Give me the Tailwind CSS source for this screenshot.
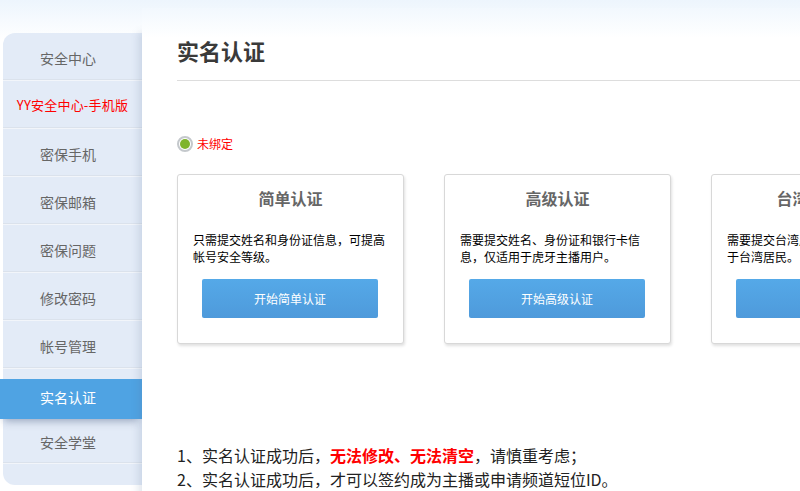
<!DOCTYPE html>
<html lang="zh-CN">
<head>
  <meta charset="UTF-8" />
  <title>实名认证</title>
  <script src="https://cdn.jsdelivr.net/npm/@tailwindcss/browser@4"></script>
</head>
<body class="h-[491px] w-[800px] overflow-hidden bg-white font-['Noto_Sans_CJK_SC','Liberation_Sans',sans-serif]">
  <div class="flex h-[491px] bg-gradient-to-b from-[#edf5fd] to-white to-[40px]">

    <!-- left menu -->
    <aside class="ml-[3px] mt-[33px] h-[452px] w-[139px] shrink-0 rounded-l-[12px] bg-[#e3ebf7] text-center text-sm text-[#666]">
      <a class="block h-[47px] border-b border-[#dbe2ec] pt-[15px] pr-[9px] leading-5 shadow-[0_1px_0_#f2f5fa]">安全中心</a>
      <a class="block h-[48px] border-b border-[#dbe2ec] pt-[15px] leading-5 text-[13px] tracking-[0.2px] text-[#f00] whitespace-nowrap shadow-[0_1px_0_#f2f5fa]">YY安全中心-手机版</a>
      <a class="block h-[48px] border-b border-[#dbe2ec] pt-4 pr-[9px] leading-5 shadow-[0_1px_0_#f2f5fa]">密保手机</a>
      <a class="block h-[48px] border-b border-[#dbe2ec] pt-4 pr-[9px] leading-5 shadow-[0_1px_0_#f2f5fa]">密保邮箱</a>
      <a class="block h-[48px] border-b border-[#dbe2ec] pt-4 pr-[9px] leading-5 shadow-[0_1px_0_#f2f5fa]">密保问题</a>
      <a class="block h-[48px] border-b border-[#dbe2ec] pt-4 pr-[9px] leading-5 shadow-[0_1px_0_#f2f5fa]">修改密码</a>
      <a class="block h-[48px] border-b border-[#dbe2ec] pt-4 pr-[9px] leading-5 shadow-[0_1px_0_#f2f5fa]">帐号管理</a>
      <a class="-ml-[3px] mt-[11px] block h-10 w-[142px] bg-[#4fa3e3] pt-2 pr-[6px] leading-5 text-white shadow-[0_6px_8px_-4px_rgba(60,80,120,0.45)]">实名认证</a>
      <a class="block h-[44px] border-b border-[#dbe2ec] pt-[13px] pr-[9px] leading-5 shadow-[0_1px_0_#f2f5fa]">安全学堂</a>
    </aside>

    <!-- content -->
    <main class="relative mt-2 min-w-0 flex-1 overflow-hidden bg-gradient-to-b from-[#f2f8fe] to-white to-[30px] pl-[35px] shadow-[-4px_24px_7px_rgba(90,110,150,0.16)]">
      <h1 class="mt-[26px] h-[47px] border-b border-[#ddd] text-[22px] leading-8 font-bold text-[#3a3a3a]">实名认证</h1>

      <div class="mt-[55px] flex h-4 items-center gap-[4px] text-xs text-[#f00]">
        <span class="flex h-4 w-4 items-center justify-center rounded-full border-2 border-[#c4c8cc] bg-white">
          <span class="h-[10px] w-[10px] rounded-full bg-[#7fb42c]"></span>
        </span>
        <span>未绑定</span>
      </div>

      <div class="mt-[22px] flex gap-10">
        <section class="h-[170px] w-[227px] shrink-0 rounded-[3px] border border-[#d8d8d8] bg-white px-[15px] shadow-[1px_2px_3px_rgba(0,0,0,0.12)]">
          <h2 class="mt-[11px] text-center text-base leading-6 font-bold text-[#666]">简单认证</h2>
          <p class="mt-[21px] h-[39px] text-xs leading-[17px] text-black">只需提交姓名和身份证信息，可提高帐号安全等级。</p>
          <button class="mx-[9px] mt-[9px] block h-[39px] w-[176px] rounded-[2px] bg-gradient-to-b from-[#55a9e8] to-[#4e9adb] text-xs text-white">开始简单认证</button>
        </section>
        <section class="h-[170px] w-[227px] shrink-0 rounded-[3px] border border-[#d8d8d8] bg-white px-[15px] shadow-[1px_2px_3px_rgba(0,0,0,0.12)]">
          <h2 class="mt-[11px] text-center text-base leading-6 font-bold text-[#666]">高级认证</h2>
          <p class="mt-[21px] h-[39px] text-xs leading-[17px] text-black">需要提交姓名、身份证和银行卡信息，仅适用于虎牙主播用户。</p>
          <button class="mx-[9px] mt-[9px] block h-[39px] w-[176px] rounded-[2px] bg-gradient-to-b from-[#55a9e8] to-[#4e9adb] text-xs text-white">开始高级认证</button>
        </section>
        <section class="h-[170px] w-[227px] shrink-0 rounded-[3px] border border-[#d8d8d8] bg-white px-[15px] shadow-[1px_2px_3px_rgba(0,0,0,0.12)]">
          <h2 class="mt-[11px] text-center text-base leading-6 font-bold text-[#666]">台湾居民认证</h2>
          <p class="mt-[21px] h-[39px] text-xs leading-[17px] text-black">需要提交台湾居民通行证件，仅适用于台湾居民。</p>
          <button class="mx-[9px] mt-[9px] block h-[39px] w-[176px] rounded-[2px] bg-gradient-to-b from-[#55a9e8] to-[#4e9adb] text-xs text-white">开始认证</button>
        </section>
      </div>

      <div class="mt-[99px] whitespace-nowrap text-base leading-6 text-[#222]">
        <p>1、实名认证成功后，<b class="font-bold text-[#f00]">无法修改、无法清空</b>，请慎重考虑；</p>
        <p>2、实名认证成功后，才可以签约成为主播或申请频道短位ID。</p>
      </div>
    </main>
  </div>
</body>
</html>
